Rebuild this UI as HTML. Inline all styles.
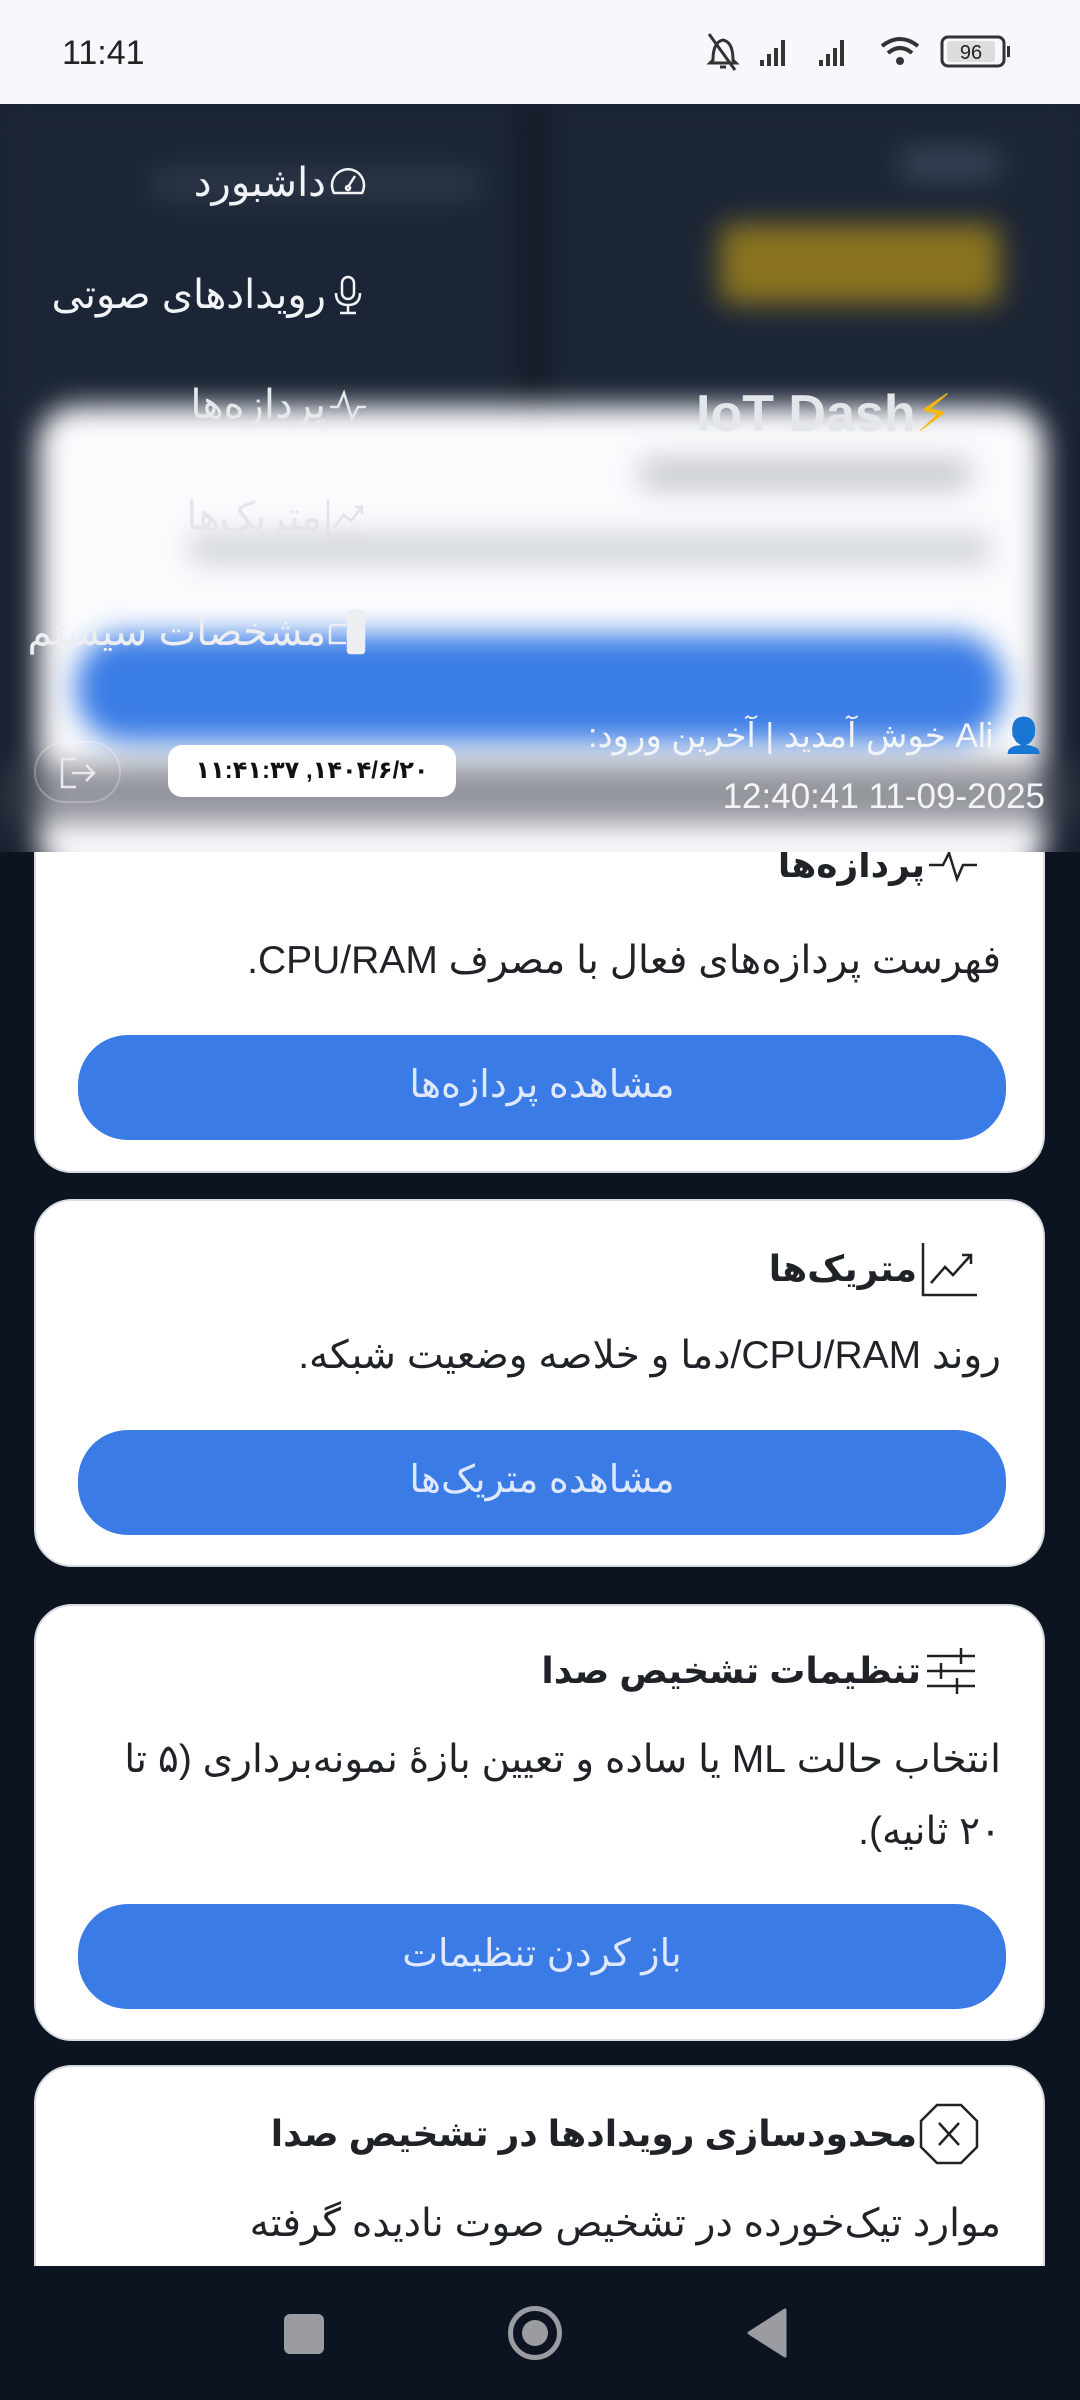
<!DOCTYPE html>
<html><head><meta charset="utf-8">
<style>
*{margin:0;padding:0;box-sizing:border-box}
body{width:1080px;height:2400px;overflow:hidden;background:#0d1421;font-family:"Liberation Sans","DejaVu Sans",sans-serif;position:relative}
.status{position:absolute;left:0;top:0;width:1080px;height:104px;background:#f8f7fc;z-index:3}
.time{position:absolute;left:62px;top:34px;font-size:34px;color:#222}
.abs{position:absolute}
.hdr{position:absolute;left:0;top:104px;width:1080px;height:748px;overflow:hidden;background:#1a2232;z-index:2}
.blurwrap{position:absolute;left:0;top:0;width:1080px;height:748px;filter:blur(14px)}
.card{position:absolute;left:34px;width:1011px;background:#fff;border-radius:38px;border:2px solid #d8dbe0;overflow:hidden}
.card h3{position:absolute;right:64px;font-size:36px;font-weight:bold;color:#1f2328;direction:rtl;display:flex;align-items:center;gap:2px;white-space:nowrap}
.card p{position:absolute;right:42px;left:50px;font-size:39px;color:#1f2328;direction:rtl;text-align:right;line-height:72px}
.btn{position:absolute;left:42px;width:928px;height:105px;background:#3a7be6;border-radius:50px;color:#dfe8ff;font-size:38px;text-align:center;line-height:100px;direction:rtl}
.menu{position:absolute;right:712px;color:#f1f3f6;font-size:40px;direction:rtl;display:flex;align-items:center;gap:2px;white-space:nowrap}
</style></head><body>
<div class="status">
 <div class="time">11:41</div>
 <svg class="abs" style="left:705px;top:30px" width="320" height="44" viewBox="0 0 320 44">
  <g fill="none" stroke="#333" stroke-width="3"><path d="M8 30 Q8 12 18 10 Q28 12 28 30 L31 33 H5 Z"/><path d="M4 4 L30 40"/><path d="M15 37 h6"/></g>
  <g fill="#333"><rect x="55" y="30" width="4" height="6"/><rect x="62" y="24" width="4" height="12"/><rect x="69" y="18" width="4" height="18"/><rect x="76" y="10" width="4" height="26"/>
  <rect x="114" y="30" width="4" height="6"/><rect x="121" y="24" width="4" height="12"/><rect x="128" y="18" width="4" height="18"/><rect x="135" y="10" width="4" height="26"/></g>
  <g fill="none" stroke="#333" stroke-width="4"><path d="M177 16 Q195 2 213 16"/><path d="M183 23 Q195 13 207 23"/></g><circle cx="195" cy="31" r="4" fill="#333"/>
  <rect x="237" y="7" width="62" height="29" rx="6" fill="none" stroke="#333" stroke-width="3"/><rect x="242" y="11" width="48" height="21" rx="3" fill="#ddd"/>
  <rect x="302" y="16" width="3" height="11" fill="#333"/>
  <text x="266" y="29" font-size="20" text-anchor="middle" fill="#222" font-family="Liberation Sans">96</text>
 </svg>
</div>

<div class="hdr">
 <div class="blurwrap">
  <div class="abs" style="left:0;top:0;width:1080px;height:320px;background:#1c2535"></div>
  <div class="abs" style="left:520px;top:0;width:30px;height:320px;background:#141b28"></div>
  <div class="abs" style="left:720px;top:120px;width:280px;height:80px;background:#8a7420;border-radius:10px"></div>
  <div class="abs" style="left:900px;top:45px;width:100px;height:30px;background:#3b4456;border-radius:8px"></div>
  <div class="abs" style="left:150px;top:65px;width:330px;height:30px;background:#2e3748;border-radius:8px"></div>
  <div class="abs" style="left:38px;top:302px;width:1007px;height:470px;background:#fafbfd;border-radius:38px"></div>
  <div class="abs" style="left:640px;top:355px;width:330px;height:30px;background:#c4c8ce;border-radius:8px"></div>
  <div class="abs" style="left:190px;top:430px;width:800px;height:30px;background:#d0d4d8;border-radius:8px"></div>
  <div class="abs" style="left:76px;top:530px;width:928px;height:108px;background:#3b7de6;border-radius:50px"></div>
  <div class="abs" style="left:0;top:660px;width:1080px;height:60px;background:rgba(60,66,76,.55)"></div>
 </div>
 <div class="menu" style="top:56px"><svg width="40" height="40" viewBox="0 0 40 40" fill="none" stroke="#f1f3f6" stroke-width="2.5"><path d="M6 30 A16 16 0 1 1 34 30 Z"/><path d="M20 24 L27 13"/><circle cx="20" cy="25" r="2"/></svg>داشبورد</div>
 <div class="menu" style="top:168px"><svg width="40" height="44" viewBox="0 0 40 44" fill="none" stroke="#f1f3f6" stroke-width="2.5"><rect x="14" y="4" width="12" height="22" rx="6"/><path d="M8 20 Q8 32 20 32 Q32 32 32 20 M20 32 V40 M12 40 H28"/></svg>رویدادهای صوتی</div>
 <div class="menu" style="top:278px;color:#e6e8ec"><svg width="40" height="40" viewBox="0 0 40 40" fill="none" stroke="#e6e8ec" stroke-width="2.5"><path d="M2 22 H10 L16 8 L24 34 L30 22 H38"/></svg>پردازه‌ها</div>
 <div class="menu" style="top:390px;color:#e4e6ea"><svg width="44" height="44" viewBox="0 0 44 44" fill="none" stroke="#dfe2e6" stroke-width="2.5"><path d="M4 4 V40 H42 M10 32 L20 20 L27 26 L38 12 M31 12 H38 V19"/></svg>متریک‌ها</div>
 <div class="menu" style="top:503px;color:#eceef2"><svg width="40" height="50" viewBox="0 0 40 50" fill="none" stroke="#eceef2" stroke-width="2.5"><rect x="20" y="4" width="16" height="42" rx="2" fill="#eceef2"/><path d="M2 18 H18 M2 18 V36 H18"/></svg>مشخصات سیستم</div>
 <div class="abs" style="left:696px;top:280px;font-size:52px;font-weight:bold;color:#e3e6ea;white-space:nowrap">IoT Dash<span style="color:#f6b914">⚡</span></div>
 <div class="abs" style="right:35px;top:612px;font-size:34px;color:#f3f4f6;direction:rtl;white-space:nowrap"><span style="color:#3b82f6">👤</span> Ali خوش آمدید | آخرین ورود:</div>
 <div class="abs" style="right:35px;top:673px;font-size:35px;color:#f3f4f6;white-space:nowrap">12:40:41 11-09-2025</div>
 <div class="abs" style="left:168px;top:641px;width:288px;height:52px;background:#fff;border-radius:14px;font-size:24px;font-weight:bold;color:#111;text-align:center;line-height:52px;direction:rtl">۱۴۰۴/۶/۲۰, ۱۱:۴۱:۳۷</div>
 <div class="abs" style="left:34px;top:637px;width:87px;height:62px;border:2px solid rgba(255,255,255,.25);border-radius:31px"><svg class="abs" style="left:22px;top:12px" width="40" height="36" viewBox="0 0 40 36" fill="none" stroke="#e8eaee" stroke-width="2.5"><path d="M18 4 H4 V32 H18 M14 18 H36 M28 10 L36 18 L28 26"/></svg></div>
</div>

<div class="card" style="top:780px;height:393px">
 <h3 style="top:62px"><svg width="52" height="40" viewBox="0 0 52 40" fill="none" stroke="#222" stroke-width="2.5"><path d="M2 20 H16 L22 8 L30 34 L36 20 H50"/></svg>پردازه‌ها</h3>
 <p style="top:143px">فهرست پردازه‌های فعال با مصرف CPU/RAM.</p>
 <div class="btn" style="top:253px">مشاهده پردازه‌ها</div>
</div>
<div class="card" style="top:1199px;height:368px">
 <h3 style="top:38px"><svg width="60" height="60" viewBox="0 0 60 60" fill="none" stroke="#222" stroke-width="2.5"><path d="M4 4 V56 H58 M12 44 L26 28 L34 36 L52 16 M43 16 H52 V25"/></svg>متریک‌ها</h3>
 <p style="top:119px">روند CPU/RAM/دما و خلاصه وضعیت شبکه.</p>
 <div class="btn" style="top:229px">مشاهده متریک‌ها</div>
</div>
<div class="card" style="top:1604px;height:437px">
 <h3 style="top:40px"><svg width="56" height="50" viewBox="0 0 56 50" fill="none" stroke="#222" stroke-width="2.5"><path d="M4 10 H52 M4 25 H52 M4 40 H52 M38 2 V18 M18 17 V33 M34 32 V48"/></svg>تنظیمات تشخیص صدا</h3>
 <p style="top:118px">انتخاب حالت ML یا ساده و تعیین بازهٔ نمونه‌برداری (۵ تا ۲۰ ثانیه).</p>
 <div class="btn" style="top:298px">باز کردن تنظیمات</div>
</div>
<div class="card" style="top:2065px;height:240px">
 <h3 style="top:36px"><svg width="60" height="62" viewBox="0 0 60 62" fill="none" stroke="#222" stroke-width="2.5"><path d="M18 2 H42 L58 18 V44 L42 60 H18 L2 44 V18 Z M20 20 L40 42 M40 20 L20 42"/></svg>محدودسازی رویدادها در تشخیص صدا</h3>
 <p style="top:121px">موارد تیک‌خورده در تشخیص صوت نادیده گرفته</p>
</div>
<div class="abs" style="left:0;top:2266px;width:1080px;height:134px;background:#0d1421"></div>
<div class="abs" style="left:284px;top:2314px;width:40px;height:40px;background:#9a9ca1;border-radius:6px"></div>
<div class="abs" style="left:508px;top:2306px;width:54px;height:54px;border:5px solid #9a9ca1;border-radius:50%"><div class="abs" style="left:9px;top:9px;width:26px;height:26px;background:#9a9ca1;border-radius:50%"></div></div>
<svg class="abs" style="left:745px;top:2308px" width="42" height="50" viewBox="0 0 42 50"><path d="M40 2 V48 L4 25 Z" fill="#9a9ca1" stroke="#9a9ca1" stroke-width="3" stroke-linejoin="round"/></svg>
</body></html>
